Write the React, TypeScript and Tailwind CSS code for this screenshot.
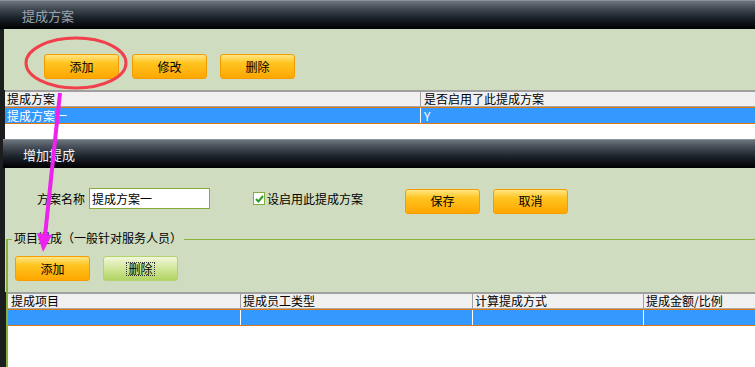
import React from "react";

const font = "font-['SimSun','Noto_Sans_CJK_SC',sans-serif]";
const orangeBtn =
  "w-[75px] h-[25px] rounded-[3px] border border-[#f59d00] bg-[linear-gradient(to_bottom,#ffe684_0%,#ffc420_35%,#ffa600_100%)] text-[12px] leading-none text-black flex items-center justify-center";
const greenBtn =
  "w-[75px] h-[25px] rounded-[3px] border border-[#b3d36e] bg-[linear-gradient(to_bottom,#f2f7dc_0%,#d5e8a0_45%,#b2d462_100%)] text-[12px] leading-none text-black flex items-center justify-center";
const titleBar =
  "h-[29px] flex items-center border-t border-[#8a939c] bg-[linear-gradient(to_bottom,#6c747d_0%,#454d56_25%,#1b222a_60%,#000000_100%)]";

function TitleBar({ title, light }: { title: string; light?: boolean }) {
  return (
    <div className={titleBar}>
      <span className={`text-[13px] leading-none ${light ? "text-[#f2f6fb] pl-[20px]" : "text-[#9aa3ac] pl-[22px]"}`}>{title}</span>
    </div>
  );
}

export default function App() {
  return (
    <div className={`relative w-[755px] h-[367px] overflow-hidden bg-[#1c1d1f] ${font}`}>
      {/* 提成方案 */}
      <TitleBar title="提成方案" />
      <div className="ml-[4px] bg-[#cfdcbf] h-[61px] flex items-start gap-[13px] pl-[40px] pt-[25px]">
        <button className={orangeBtn}>添加</button>
        <button className={orangeBtn}>修改</button>
        <button className={orangeBtn}>删除</button>
      </div>
      <div className="ml-[5px] bg-white h-[49px] border-t-2 border-[#a0a0a0] text-[12px] leading-none">
        <div className="flex h-[15px] bg-[#f0f0f0] border-b border-[#a8a8a8]">
          <div className="w-[415px] pl-[2px] flex items-center">提成方案</div>
          <div className="flex-1 border-l border-[#a0a0a0] pl-[3px] flex items-center">是否启用了此提成方案</div>
        </div>
        <div className="flex h-[17px] bg-[#3399ff] border-y border-[#e07612] text-white">
          <div className="w-[415px] pl-[2px] flex items-center">提成方案一</div>
          <div className="flex-1 border-l border-white pl-[3px] flex items-center">Y</div>
        </div>
      </div>

      {/* 增加提成 */}
      <div className="ml-[3px]">
        <TitleBar title="增加提成" light />
      </div>
      <div className="ml-[5px] bg-[#cfdcbf] h-[124px] pt-[20px] flex flex-col">
        <div className="flex items-center h-[21px] text-[12px] leading-none">
          <span className="ml-[32px] w-[52px]">方案名称</span>
          <div className="w-[121px] h-[21px] border border-[#86ad3c] bg-white flex items-center pl-[2px]">提成方案一</div>
          <div className="ml-[43px] w-[12px] h-[13px] border border-[#86ad3c] bg-white flex items-center justify-center">
            <svg width="9" height="8" viewBox="0 0 9 8">
              <path d="M1 4 L3.5 6.5 L8 1" stroke="#2f9a2a" strokeWidth="2" fill="none" />
            </svg>
          </div>
          <span className="ml-[2px]">设启用此提成方案</span>
          <div className="flex gap-[13px] ml-[42px] mt-[5px]">
            <button className={orangeBtn}>保存</button>
            <button className={orangeBtn}>取消</button>
          </div>
        </div>
        <div className="ml-[1px] mt-[30px] h-[53px] border-l-2 border-t border-[#86b23a] relative">
          <span className="absolute -top-[8px] left-[4px] bg-[#cfdcbf] px-[2px] text-[12px] leading-none">项目提成（一般针对服务人员）</span>
          <div className="flex gap-[13px] pl-[7px] pt-[16px]">
            <button className={orangeBtn}>添加</button>
            <button className={greenBtn}>
              <span className="outline-1 outline-dotted outline-[#333] px-[1px]">删除</span>
            </button>
          </div>
        </div>
      </div>
      <div className="ml-[6px] border-l-2 border-[#86b23a] h-[80px]">
        <div className="bg-white h-full border-t-2 border-[#a0a0a0] text-[12px] leading-none">
          <div className="flex h-[15px] bg-[#f0f0f0] border-b border-[#a8a8a8]">
            <div className="w-[232px] pl-[3px] flex items-center">提成项目</div>
            <div className="w-[232px] border-l border-[#a0a0a0] pl-[2px] flex items-center">提成员工类型</div>
            <div className="w-[171px] border-l border-[#a0a0a0] pl-[2px] flex items-center">计算提成方式</div>
            <div className="flex-1 border-l border-[#a0a0a0] pl-[2px] flex items-center">提成金额/比例</div>
          </div>
          <div className="flex h-[17px] bg-[#3399ff] border-y border-[#e07612]">
            <div className="w-[232px]" />
            <div className="w-[232px] border-l border-white" />
            <div className="w-[171px] border-l border-white" />
            <div className="flex-1 border-l border-white" />
          </div>
        </div>
      </div>

      {/* annotations */}
      <svg className="absolute left-0 top-0 pointer-events-none" width="755" height="367">
        <ellipse cx="76" cy="63" rx="50" ry="25" fill="none" stroke="#f0404c" strokeWidth="3" />
        <line x1="60" y1="93" x2="45" y2="236" stroke="#ee22ee" strokeWidth="4" />
        <polygon points="37,233 52,235 43,252" fill="#ee22ee" />
      </svg>
    </div>
  );
}
